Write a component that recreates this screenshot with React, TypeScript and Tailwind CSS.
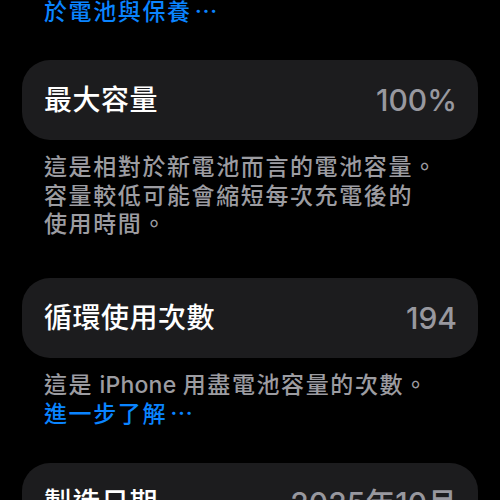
import React from "react";

const cjk = { fontFamily: 'Inter, "Noto Sans CJK TC", "Noto Sans CJK SC", sans-serif' };

function Row({ label, value }: { label: string; value: string }) {
  return (
    <div className="flex h-[80px] items-center justify-between rounded-[28px] bg-[#1c1c1e] pl-[22px] pr-[21px]">
      <span className="text-[28px] font-medium leading-none tracking-[0.5px] text-white whitespace-nowrap">{label}</span>
      <span className="text-[30px] font-medium leading-none text-[#98989f] whitespace-nowrap">{value}</span>
    </div>
  );
}

export default function App() {
  return (
    <div className="h-[500px] w-[500px] overflow-hidden bg-black px-[22px]" style={cjk}>
      <p className="mt-[-2px] pl-[22px] text-[23px] font-medium leading-[28.5px] tracking-[1.6px] text-[#0a84ff] whitespace-nowrap">
        於電池與保養<span className="ml-[3px]">⋯</span>
      </p>
      <div className="mt-[33.5px]">
        <Row label="最大容量" value="100%" />
      </div>
      <p className="mt-[13px] pl-[22px] text-[23px] font-medium leading-[28.5px] tracking-[1.6px] text-[#9c9ca1] whitespace-nowrap">
        這是相對於新電池而言的電池容量。
        <br />
        容量較低可能會縮短每次充電後的
        <br />
        使用時間。
      </p>
      <div className="mt-[39.5px]">
        <Row label="循環使用次數" value="194" />
      </div>
      <p className="mt-[13px] pl-[22px] text-[23px] font-medium leading-[28.5px] tracking-[1.6px] text-[#9c9ca1] whitespace-nowrap">
        這是<span className="tracking-[0.2px]"> iPhone </span>用盡電池容量的次數。
        <br />
        <span className="text-[#0a84ff]">
          進一步了解<span className="ml-[3px]">⋯</span>
        </span>
      </p>
      <div className="mt-[35px]">
        <Row label="製造日期" value="2025年10月" />
      </div>
    </div>
  );
}
